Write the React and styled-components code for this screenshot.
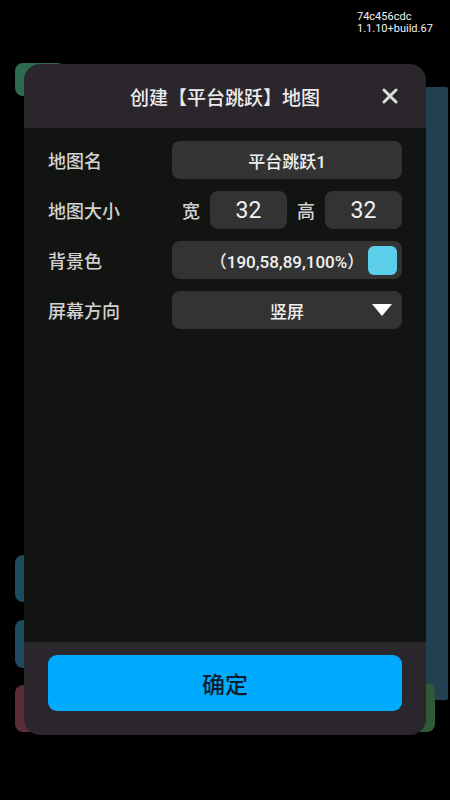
import React from 'react';
import styled, { createGlobalStyle } from 'styled-components';

const GlobalStyle = createGlobalStyle`
  html, body {
    margin: 0;
    padding: 0;
    background: #000;
  }
  body {
    font-family: "Roboto", "Noto Sans CJK SC", sans-serif;
  }
`;

const Screen = styled.div`
  position: relative;
  width: 450px;
  height: 800px;
  background: #000;
  overflow: hidden;
  padding: 64px 24px 0 24px;
  box-sizing: border-box;
`;

const Version = styled.div`
  position: absolute;
  top: 11px;
  left: 357px;
  color: #f2f2f2;
  font-family: "Roboto", sans-serif;
  font-size: 11px;
  line-height: 12px;
`;

const Block = styled.div`
  position: absolute;
  left: ${p => p.x}px;
  top: ${p => p.y}px;
  width: ${p => p.w}px;
  height: ${p => p.h}px;
  background: ${p => p.color};
  border-radius: ${p => p.r || 8}px;
`;

const Dialog = styled.div`
  position: relative;
  width: 402px;
  height: 671px;
  border-radius: 16px;
  overflow: hidden;
  display: flex;
  flex-direction: column;
  background: #2b262c;
`;

const Header = styled.div`
  position: relative;
  height: 64px;
  display: flex;
  align-items: center;
  justify-content: center;
  color: #ececec;
  font-size: 19px;
  font-weight: 500;
  font-family: "Noto Sans CJK SC", sans-serif;
`;

const Close = styled.div`
  position: absolute;
  right: 28px;
  top: 24px;
  width: 16px;
  height: 16px;
  display: flex;
`;

const Body = styled.div`
  flex: 1;
  background: #121411;
  padding: 13px 24px 0 24px;
  display: flex;
  flex-direction: column;
  gap: 12px;
`;

const Row = styled.div`
  display: flex;
  align-items: center;
  height: 38px;
`;

const Label = styled.div`
  width: 124px;
  flex-shrink: 0;
  color: #d2d2d2;
  font-size: 18px;
  font-weight: 500;
  font-family: "Noto Sans CJK SC", sans-serif;
`;

const Field = styled.div`
  position: relative;
  flex: ${p => (p.w ? 'none' : 1)};
  width: ${p => (p.w ? `${p.w}px` : 'auto')};
  height: 38px;
  background: #333333;
  border-radius: 8px;
  display: flex;
  align-items: center;
  justify-content: center;
  color: #f0f0f0;
  font-size: ${p => p.size || 17}px;
  font-weight: ${p => (p.w ? 400 : 500)};
  font-family: "Roboto", "Noto Sans CJK SC", sans-serif;
`;

const SizeLabel = styled.div`
  margin: 0 10px;
  color: #d2d2d2;
  font-size: 18px;
  font-weight: 500;
  font-family: "Noto Sans CJK SC", sans-serif;
`;

const Swatch = styled.div`
  position: absolute;
  right: 5px;
  top: 5px;
  width: 29px;
  height: 29px;
  border-radius: 6px;
  background: #5bcfea;
`;

const Arrow = styled.div`
  position: absolute;
  right: 10px;
  top: 13px;
  width: 0;
  height: 0;
  border-left: 10px solid transparent;
  border-right: 10px solid transparent;
  border-top: 12px solid #fff;
`;

const Footer = styled.div`
  height: 93px;
  box-sizing: border-box;
  padding: 13px 24px 24px 24px;
`;

const ConfirmButton = styled.button`
  width: 100%;
  height: 56px;
  border: none;
  border-radius: 9px;
  background: #00aaff;
  color: #0d1e2b;
  font-size: 23px;
  font-weight: 500;
  font-family: "Noto Sans CJK SC", sans-serif;
  cursor: pointer;
`;

export default function App() {
  return (
    <>
      <GlobalStyle />
      <Screen>
        <Version>
          74c456cdc
          <br />
          1.1.10+build.67
        </Version>
        <Block x={15} y={63} w={50} h={33} color="#2d6a4f" />
        <Block x={420} y={87} w={28} h={613} color="#22404f" r={2} />
        <Block x={15} y={555} w={30} h={47} color="#1c4a60" />
        <Block x={15} y={620} w={30} h={48} color="#1c4a60" />
        <Block x={15} y={685} w={30} h={47} color="#5a2c36" />
        <Block x={400} y={683} w={35} h={49} color="#2d5a38" />
        <Dialog>
          <Header>
            创建【平台跳跃】地图
            <Close>
              <svg width="16" height="16" viewBox="0 0 16 16">
                <path d="M2 2 L14 14 M14 2 L2 14" stroke="#dcdcdc" strokeWidth="3" strokeLinecap="round" />
              </svg>
            </Close>
          </Header>
          <Body>
            <Row>
              <Label>地图名</Label>
              <Field>平台跳跃1</Field>
            </Row>
            <Row>
              <Label>地图大小</Label>
              <SizeLabel>宽</SizeLabel>
              <Field w={77} size={23}>32</Field>
              <SizeLabel>高</SizeLabel>
              <Field w={77} size={23}>32</Field>
            </Row>
            <Row>
              <Label>背景色</Label>
              <Field>
                （190,58,89,100%）
                <Swatch />
              </Field>
            </Row>
            <Row>
              <Label>屏幕方向</Label>
              <Field>
                竖屏
                <Arrow />
              </Field>
            </Row>
          </Body>
          <Footer>
            <ConfirmButton>确定</ConfirmButton>
          </Footer>
        </Dialog>
      </Screen>
    </>
  );
}
